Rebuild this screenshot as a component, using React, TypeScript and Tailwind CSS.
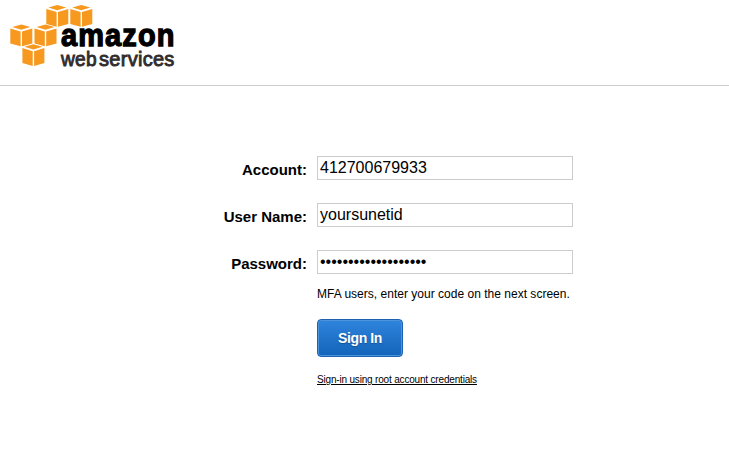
import React from "react";

function Cube({ x, y }: { x: number; y: number }) {
  return (
    <g transform={`translate(${x} ${y})`} fill="#f7981f">
      <path d="M11 0 L20 2.6 L11 5.3 L2 2.6 Z" />
      <path d="M0 3.9 L10.3 7 V21.8 L0 18.9 Z" />
      <path d="M22 3.9 L11.7 7 V21.8 L22 18.9 Z" />
    </g>
  );
}

function Logo() {
  return (
    <svg width="180" height="76" viewBox="0 0 180 76" role="img" aria-label="amazon web services">
      <Cube x={46.3} y={5} />
      <Cube x={70.3} y={5} />
      <Cube x={10.3} y={24.5} />
      <Cube x={34.5} y={24.5} />
      <Cube x={22.4} y={44.2} />
      <text x="61" y="46.4" fontSize="31" fontWeight="700" letterSpacing="1.2" textLength="114.5" lengthAdjust="spacingAndGlyphs" fill="#000" stroke="#000" strokeWidth="1.3" fontFamily="'Liberation Sans', sans-serif">amazon</text>
      <text x="61" y="65.6" fontSize="21" letterSpacing="0.3" textLength="36" lengthAdjust="spacingAndGlyphs" fill="#302b2c" stroke="#302b2c" strokeWidth="0.9" fontFamily="'Liberation Sans', sans-serif">web</text>
      <text x="99" y="65.6" fontSize="21" letterSpacing="0.3" textLength="75.6" lengthAdjust="spacingAndGlyphs" fill="#302b2c" stroke="#302b2c" strokeWidth="0.9" fontFamily="'Liberation Sans', sans-serif">services</text>
    </svg>
  );
}

function Field({ id, label, value, type = "text" }: { id: string; label: string; value: string; type?: string }) {
  return (
    <div className="flex h-6">
      <label htmlFor={id} className="mr-[10px] w-[307px] pt-[5px] text-right text-[15px] leading-[18px] font-bold">{label}</label>
      <input id={id} type={type} defaultValue={value} className="h-6 w-64 border border-[#ccc] bg-white px-[2px] pb-px text-base leading-[21px] outline-none" />
    </div>
  );
}

export default function App() {
  return (
    <div className="h-[452px] overflow-hidden bg-white font-['Liberation_Sans',Arial,sans-serif] text-black">
      <header className="h-[86px] border-b border-[#ccc]">
        <Logo />
      </header>
      <form className="pt-[70px]" onSubmit={(e) => e.preventDefault()}>
        <div className="flex flex-col gap-[23px]">
          <Field id="account" label="Account:" value="412700679933" />
          <Field id="username" label="User Name:" value="yoursunetid" />
          <Field id="password" label="Password:" value="yoursunetpassword12" type="password" />
        </div>
        <div className="ml-[317px] flex flex-col items-start">
          <p className="mt-3 text-[12px] leading-4 tracking-[0.015px] whitespace-nowrap">MFA users, enter your code on the next screen.</p>
          <button className="mt-[17px] h-[38px] w-[86px] rounded-[4px] border border-[#1d62b0] bg-linear-to-b from-[#2f84dc] to-[#1264b9] text-[14px] font-bold tracking-[-0.4px] text-white shadow-[inset_0_0_0_1px_#4b93dc] text-shadow-[0_1px_1px_#164f91]">Sign In</button>
          <a href="#" className="mt-[17px] text-[10px] leading-3 tracking-[-0.18px] whitespace-nowrap underline">Sign-in using root account credentials</a>
        </div>
      </form>
    </div>
  );
}
